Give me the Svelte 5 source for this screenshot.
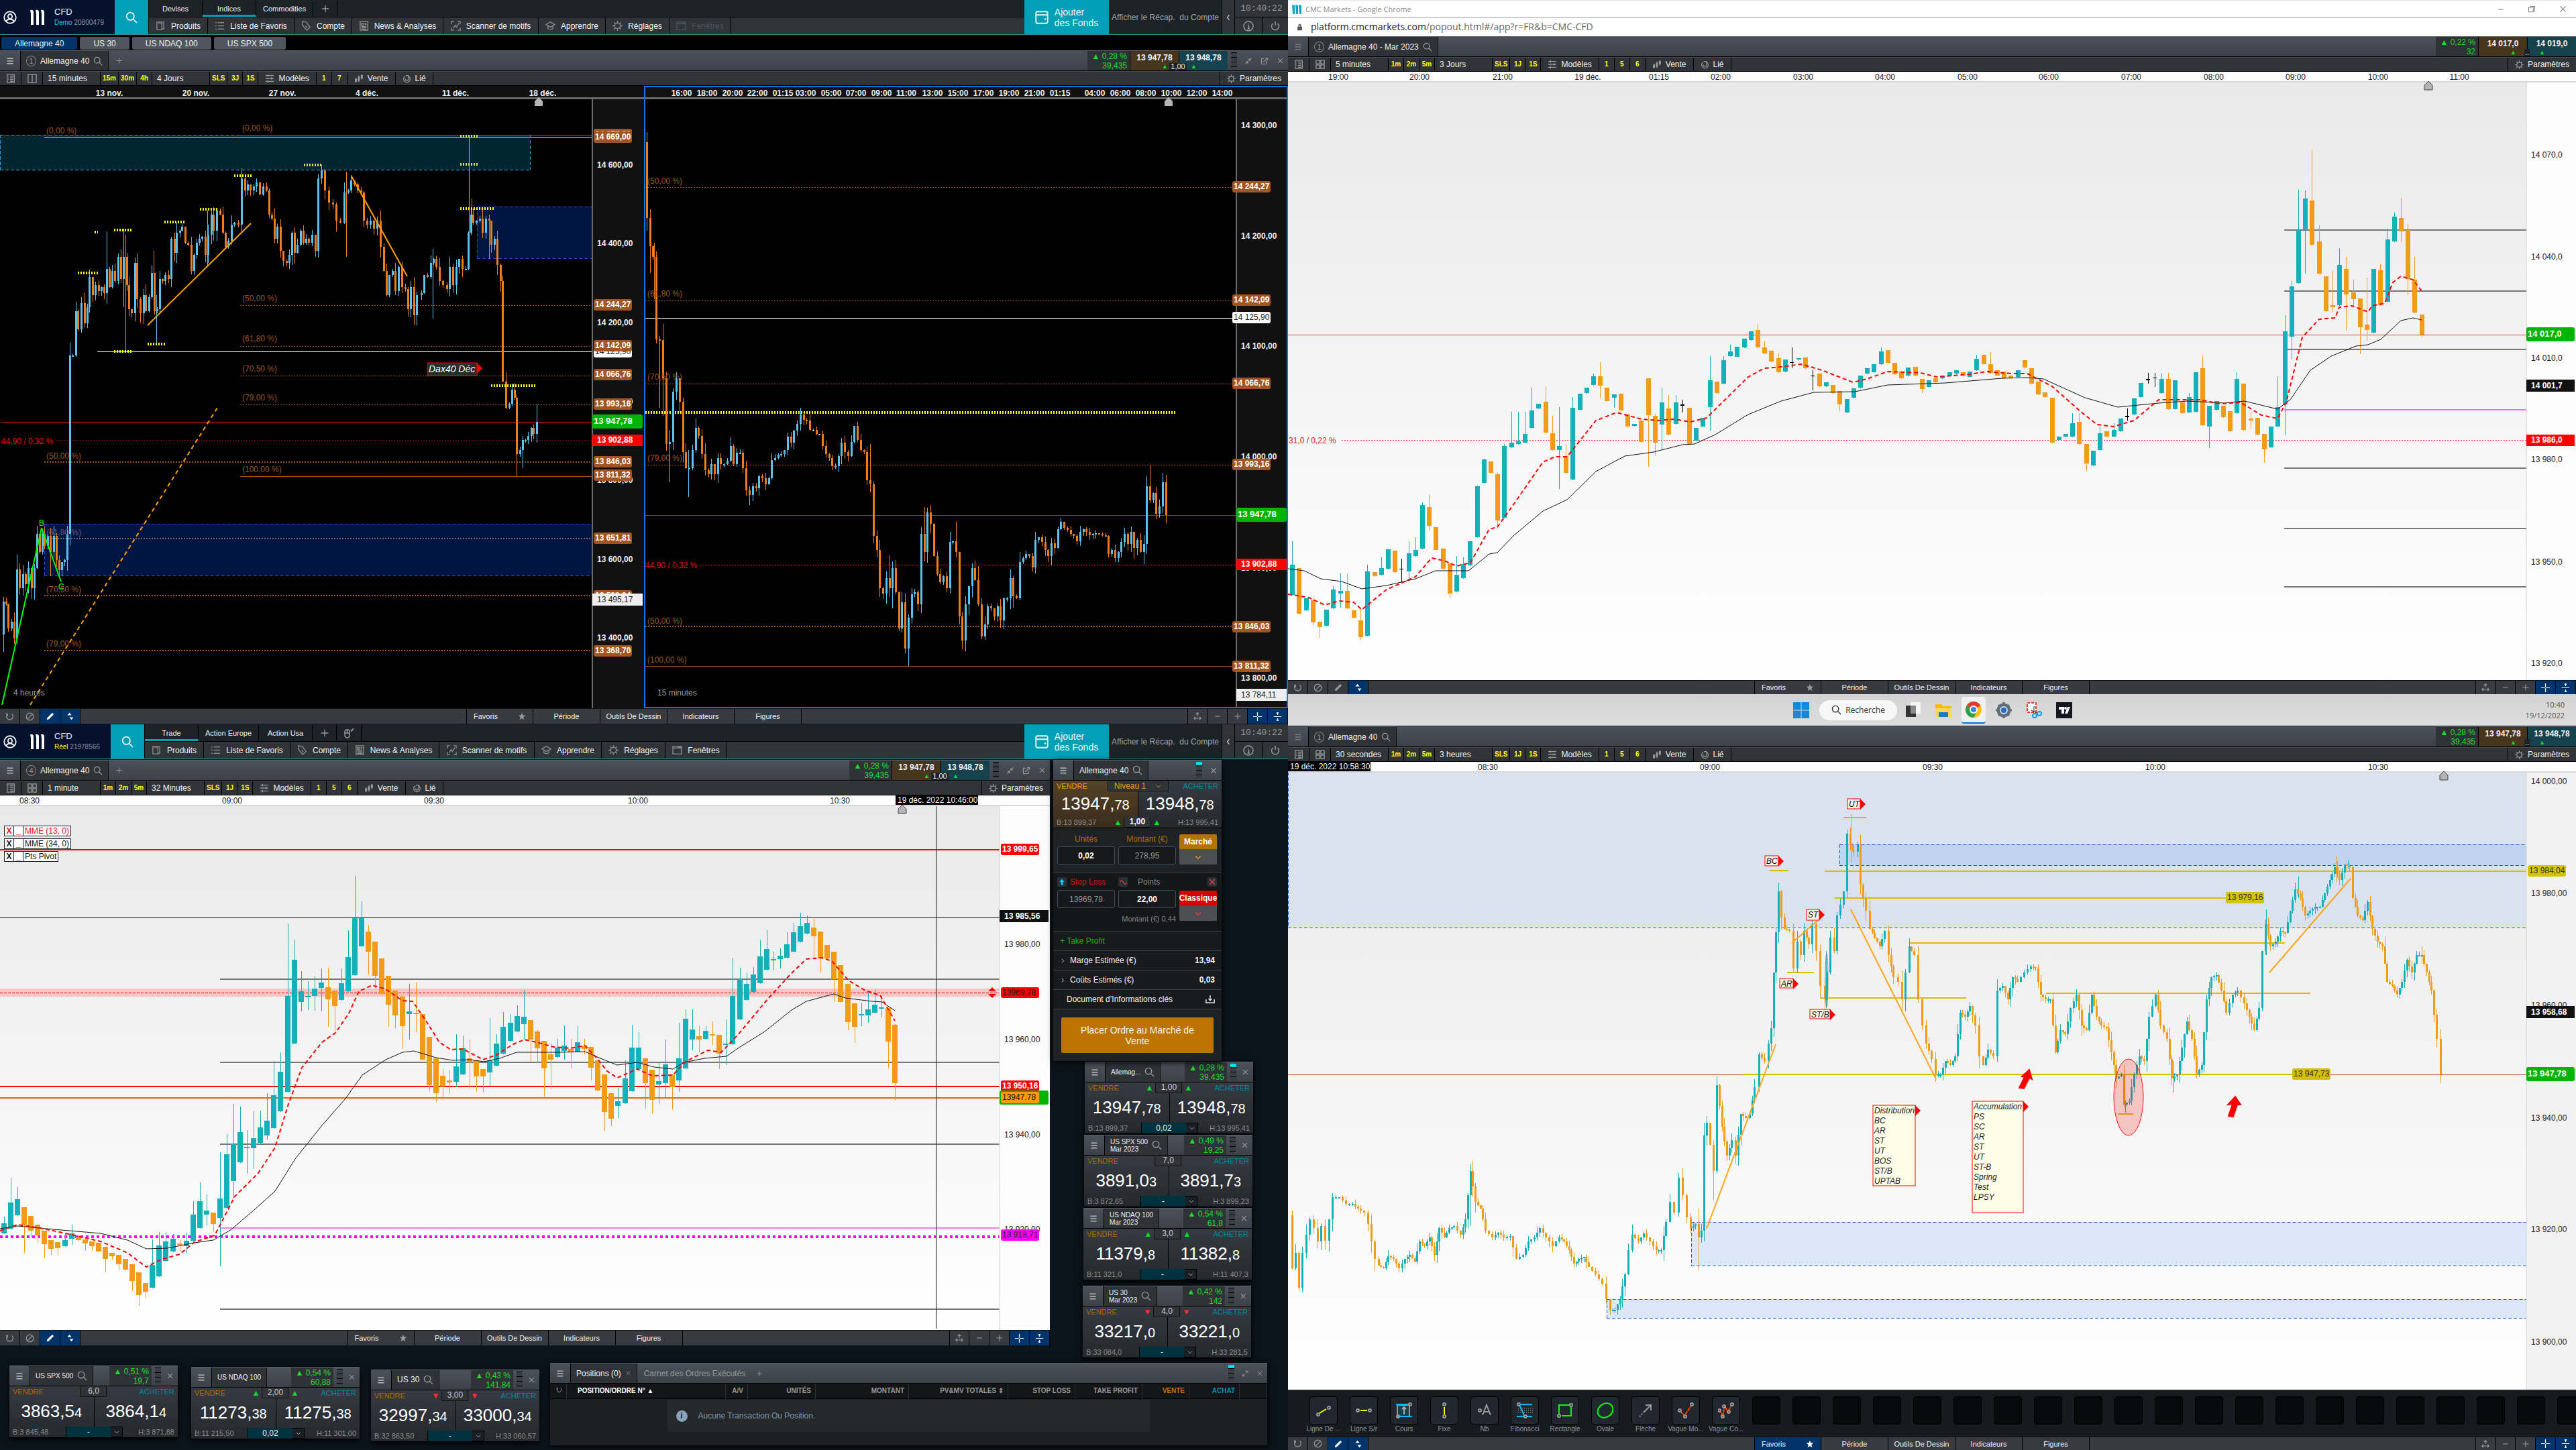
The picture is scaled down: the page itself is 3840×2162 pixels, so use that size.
<script lang="ts">
  // Four-screen trading desk: two chart workspaces on the left, two popped-out charts on the right.

  const icons: Record<string, { d: string; fill?: boolean }> = {
    user: { d: 'M8 1a7 7 0 1 0 0 14A7 7 0 0 0 8 1M8 4a2.5 2.8 0 1 1 0 5.6A2.5 2.8 0 0 1 8 4M3.5 12.5c1-2 2.5-2.5 4.5-2.5s3.5.5 4.5 2.5' },
    search: { d: 'M6.5 1.5a5 5 0 1 0 0 10 5 5 0 0 0 0-10M10 10l5 5' },
    plus: { d: 'M8 2v12M2 8h12' },
    minus: { d: 'M3 8h10' },
    close: { d: 'M3 3l10 10M13 3L3 13' },
    bars: { d: 'M2 2h12v2H2zM2 7h12v2H2zM2 12h12v2H2z', fill: true },
    products: { d: 'M2 2h8v12H2zM4 3l6 2v10M10 2h3v11h-3' },
    list: { d: 'M1 3h2M1 8h2M1 13h2M5 3h10M5 8h10M5 13h10' },
    tag: { d: 'M2 1l6 1 6 8-5 5-7-8zM5 4h.1M7 8l3 3' },
    news: { d: 'M2 1h12v14H2zM4 4h3v3H4zM9 4h3M9 6h3M4 9h8M4 11h8M4 13h8' },
    scan: { d: 'M1 5V1h4M11 1h4v4M15 11v4h-4M5 15H1v-4M4 12l3-5 2 3 4-6' },
    learn: { d: 'M1 6l7-4 7 4-7 4zM4 8v4c2 2 6 2 8 0V8' },
    gear: { d: 'M8 3.5a4.5 4.5 0 1 0 0 9 4.5 4.5 0 0 0 0-9M8 0v3M8 13v3M0 8h3M13 8h3M2.5 2.5l2 2M11.5 11.5l2 2M13.5 2.5l-2 2M4.5 11.5l-2 2' },
    window: { d: 'M1 2h14v12H1zM1 4.5h14M9 3h5' },
    wallet: { d: 'M3 1h10q2 0 2 2v10q0 2-2 2H3q-2 0-2-2V3q0-2 2-2M1 5h14M11 10h2' },
    back: { d: 'M10 3L6 8l4 5' },
    down: { d: 'M3 6l5 5 5-5' },
    right: { d: 'M5 3l5 5-5 5' },
    info: { d: 'M8 1a7 7 0 1 0 0 14A7 7 0 0 0 8 1M8 4.5v1M7 7.5h1.5V12M6.5 12h3.5' },
    power: { d: 'M8 1v6M4.5 4a5.5 5.5 0 1 0 7 0' },
    mouse: { d: 'M2 6q0-3 3-3h1q3 0 3 3v5q0 4-3.5 4T2 11zM2 8h7M5.5 3v5M11 3l1 2 3-4' },
    doc: { d: 'M2 1h12v14H2zM4 4h1M4 7h1M4 10h1M7 4h5M7 7h5M7 10h5M7 13h5' },
    split: { d: 'M1 1h14v14H1zM8 1v14' },
    quad: { d: 'M1 1h6v6H1zM9 1h6v6H9zM1 9h6v6H1zM9 9h6v6H9z' },
    sliders: { d: 'M1 3h14M1 8h14M1 13h14M5 1v4M11 6v4M5 11v4' },
    candles: { d: 'M3 7v8M8 3v11M13 1v9M2 9h2v4H2zM7 6h2v5H7zM12 3h2v4h-2z' },
    link: { d: 'M11 3a6 6 0 1 1-6 0M5 8a3 3 0 0 0 6 0V2H6' },
    refresh: { d: 'M4 3a6 6 0 1 0 8 0M4 7V3H1' },
    ban: { d: 'M8 1.5a6.5 6.5 0 1 0 0 13 6.5 6.5 0 0 0 0-13M3.5 12.5l9-9' },
    pencil: { d: 'M1 15l1-4 9-9q1-1 2 0l1 1q1 1 0 2l-9 9z', fill: true },
    updown: { d: 'M6 1l4 5H2zM10 15l4-5H6z', fill: true },
    star: { d: 'M8 1l2 5h5l-4 3.5 1.5 5.5L8 12l-4.5 3L5 9.5 1 6h5z', fill: true },
    fit: { d: 'M8 1v7M5 4l3-3 3 3M1 12h14M4 9l-3 3 3 3M12 9l3 3-3 3' },
    cross: { d: 'M8 0v7M8 9v7M0 8h7M9 8h7' },
    vfit: { d: 'M1 8h14M8 0v5M8 11v5M6 2l2-2 2 2M6 14l2 2 2-2' },
    shrink: { d: 'M9 7V3M9 7h4M9 7l5-5M7 9v4M7 9H3M7 9l-5 5' },
    grow: { d: 'M9 2h5v5M14 2L9 7M2 9v5h5M2 14l5-5' },
    popout: { d: 'M8 3H2v11h10V8M6 10l8-8M10 2h4v4' },
    square: { d: 'M2 4h9v9H2zM5 4V2h9v9h-3' },
    lock: { d: 'M3 7h10v8H3zM5 7V4q0-3 3-3t3 3v3h-2V4H7v3z', fill: true },
    download: { d: 'M1 8v6h14V8M8 1v9M5 7l3 3 3-3' },
    arrowUp: { d: 'M8 1l6 7h-4v7H6V8H2z', fill: true },
    wave: { d: 'M1 8q3-8 7 0t7 0' },
  };

  type Box = [number, number, number, number];
  type Stroke = { p: Box; c: string; w?: number; dash?: string };
  type Tag = { y: number; text: string; bg: string; fg?: string; kind?: 'full'; x?: number; h?: number };
  type Chart = {
    name: string; w: number; h: number; kx: number; ky: number; y0: number; dark?: boolean;
    axis: number; axisBg: string; body: number; up: string; down: string;
    times: [number, string][]; marker: number; ticks: [number, string][]; tags: Tag[];
    zones: { box: Box; fill: string; stroke?: string }[];
    lines: Stroke[];
    over?: Stroke[];
    texts?: [number, number, string, string][];
    notes?: { box: Box; lines: string[]; bg: string; fg: string }[];
    bars?: string; start?: number; step: number; path?: string; spikes?: Box[];
    fast?: string; slow?: string;
  };

  const brown = '#9b5522';
  const rust = '#a3541f';
  const gold = '#d6bd00';

  const daxHours: Chart = {
    name: 'Allemagne 40, 4 heures', w: 960, h: 928, kx: 1.6333, ky: 1.668, y0: -12, dark: true,
    axis: 1443, axisBg: '#111', body: 3, up: '#5bc3ef', down: '#ee7d1b', step: 7,
    times: [[267, '13 nov.'], [477, '20 nov.'], [688, '27 nov.'], [894, '4 déc.'], [1109, '11 déc.'], [1321, '18 déc.']],
    marker: 1312,
    ticks: [[176, '14 600,00'], [372, '14 400,00'], [568, '14 200,00'], [765, '14 000,00'], [960, '13 800,00'], [1157, '13 600,00'], [1352, '13 400,00']],
    tags: [
      { y: 100, text: '14 677,21', bg: rust }, { y: 107, text: '14 669,00', bg: rust }, { y: 524, text: '14 244,27', bg: rust },
      { y: 640, text: '14 125,90', bg: '#fff', fg: '#222' }, { y: 625, text: '14 142,09', bg: rust }, { y: 698, text: '14 066,76', bg: rust },
      { y: 771, text: '13 993,16', bg: rust }, { y: 914, text: '13 846,03', bg: rust }, { y: 948, text: '13 811,32', bg: rust },
      { y: 1105, text: '13 651,81', bg: rust }, { y: 1247, text: '13 508,34', bg: rust }, { y: 1384, text: '13 368,70', bg: rust },
      { y: 814, text: '13 947,78', bg: '#00b400', kind: 'full', h: 21 }, { y: 860, text: '13 902,88', bg: '#f00', kind: 'full', h: 17 },
      { y: 1257, text: '13 495,17', bg: '#eee', fg: '#222', kind: 'full', h: 18 },
    ],
    zones: [
      { box: [0, 102, 1291, 188], fill: '#022631', stroke: '#1e9fe0' },
      { box: [1162, 281, 1443, 409], fill: '#001541', stroke: '#1448d8' },
      { box: [108, 1070, 1443, 1198], fill: '#001541', stroke: '#1448d8' },
    ],
    lines: [
      { p: [585, 101, 1443, 101], c: brown }, { p: [108, 108, 1443, 108], c: '#a07050', w: 2 },
      { p: [585, 525, 1443, 525], c: brown, dash: '2 2' }, { p: [585, 627, 1443, 627], c: brown, dash: '2 2' },
      { p: [585, 700, 1443, 700], c: brown, dash: '2 2' }, { p: [585, 773, 1443, 773], c: brown, dash: '2 2' },
      { p: [108, 915, 1443, 915], c: brown, w: 2, dash: '2 2' }, { p: [585, 950, 1443, 950], c: brown },
      { p: [108, 1106, 1443, 1106], c: '#7c6468', w: 2, dash: '2 2' }, { p: [108, 1248, 1443, 1248], c: brown, w: 2, dash: '2 2' },
      { p: [108, 1385, 1443, 1385], c: brown, w: 2, dash: '2 2' }, { p: [237, 641, 1443, 641], c: '#fff' },
      { p: [3, 816, 1443, 816], c: '#f01010' }, { p: [135, 861, 1443, 861], c: '#8c1010', dash: '2 2' },
    ],
    over: [
      { p: [360, 575, 611, 322], c: '#ffa000', w: 2 }, { p: [856, 205, 991, 454], c: '#ffa000', w: 2 },
      { p: [73, 1520, 529, 781], c: '#ffa000', w: 2, dash: '6 5' },
      { p: [5, 1520, 102, 1080], c: '#0f0', w: 2 }, { p: [102, 1080, 149, 1212], c: '#0f0', w: 2 },
      { p: [189, 446, 240, 446], c: '#ff0', w: 4, dash: '2 2' }, { p: [230, 343, 238, 343], c: '#ff0', w: 4, dash: '2 2' },
      { p: [278, 338, 320, 338], c: '#ff0', w: 4, dash: '2 2' }, { p: [278, 640, 320, 640], c: '#ff0', w: 4, dash: '2 2' },
      { p: [359, 622, 402, 622], c: '#ff0', w: 4, dash: '2 2' }, { p: [400, 318, 451, 318], c: '#ff0', w: 4, dash: '2 2' },
      { p: [487, 287, 532, 287], c: '#ff0', w: 4, dash: '2 2' }, { p: [570, 203, 613, 203], c: '#ff0', w: 4, dash: '2 2' },
      { p: [740, 177, 784, 177], c: '#cfe14c', w: 4, dash: '2 2' }, { p: [1120, 105, 1164, 105], c: '#cfe14c', w: 4, dash: '2 2' },
      { p: [1120, 175, 1164, 175], c: '#cfe14c', w: 4, dash: '2 2' }, { p: [1120, 285, 1203, 285], c: '#ff0', w: 4, dash: '2 2' },
      { p: [1196, 725, 1304, 725], c: '#ff0', w: 4, dash: '2 2' },
    ],
    texts: [
      [113, 99, '(0,00 %)', brown], [590, 91, '(0,00 %)', brown], [590, 516, '(50,00 %)', brown], [590, 616, '(61,80 %)', brown],
      [590, 690, '(70,50 %)', brown], [590, 763, '(79,00 %)', brown], [590, 940, '(100,00 %)', brown], [113, 907, '(50,00 %)', brown],
      [113, 1098, '(61,80 %)', '#6b5a70'], [113, 1239, '(70,50 %)', brown], [113, 1375, '(79,00 %)', brown], [4, 870, '44,90 / 0,32 %', '#e01010'],
      [33, 1497, '4 heures', '#999'], [94, 1074, 'B', '#0f0'], [142, 1232, 'C', '#0f0'],
    ],
    notes: [{ box: [1040, 669, 1161, 700], lines: ['Dax40 Déc'], bg: '#2b2b2b', fg: '#fff' }],
    path: '8,1345 8,1262 14,1270 20,1330 28,1313 35,1355 41,1183 48,1230 55,1195 62,1220 68,1180 76,1230 84,1180 90,1095 96,1140 103,1095 108,1125 116,1100 123,1140 130,1100 137,1160 144,1185 150,1165 157,1160 163,1095 170,650 177,650 184,540 190,585 198,520 205,570 212,530 218,455 225,500 232,475 240,490 246,480 253,495 259,435 266,480 272,440 280,465 287,405 294,460 301,405 308,475 314,535 320,545 328,420 334,510 342,545 349,500 355,540 362,505 369,445 376,540 382,535 389,460 396,465 402,450 410,460 417,360 424,395 430,345 437,340 443,330 450,370 458,375 465,440 472,400 478,370 485,360 492,355 500,400 507,350 514,300 520,340 527,290 535,300 542,345 549,380 556,365 563,325 570,320 580,325 588,210 596,240 603,225 610,240 617,230 624,220 632,250 640,230 648,240 655,300 662,310 668,360 674,330 682,390 690,415 697,420 704,400 710,345 717,395 724,375 731,340 738,370 745,360 752,370 760,350 767,390 775,210 782,190 790,240 800,270 810,275 818,315 828,320 838,245 848,240 855,215 863,225 870,240 878,245 886,315 894,325 902,315 910,335 918,315 926,380 934,440 940,500 948,450 955,440 962,490 970,430 978,480 986,485 993,535 1000,480 1008,550 1015,500 1025,495 1032,450 1040,455 1048,420 1055,410 1062,430 1070,465 1078,475 1088,485 1095,430 1102,475 1110,430 1117,410 1125,435 1133,435 1140,345 1146,300 1152,320 1160,315 1168,310 1175,345 1182,310 1190,315 1196,375 1204,360 1210,425 1218,465 1224,715 1232,780 1240,770 1246,735 1252,755 1258,895 1265,885 1272,860 1279,860 1286,850 1293,830 1299,845 1306,815',
    spikes: [[170, 618, 1110, 1], [259, 342, 490, 1], [300, 335, 530, 1], [306, 350, 640, 0], [381, 500, 625, 1], [374, 390, 500, 0], [504, 290, 430, 1], [843, 193, 406, 0], [1054, 385, 558, 1], [1142, 106, 370, 1], [1149, 260, 320, 0], [1190, 300, 410, 0], [1258, 755, 950, 0], [1272, 850, 930, 1], [1306, 773, 850, 1], [41, 1146, 1368, 1], [8, 1260, 1388, 1], [123, 1080, 1200, 0]],
  };

  const daxQuarter: Chart = {
    name: 'Allemagne 40, 15 minutes', w: 960, h: 928, kx: 1.6333, ky: 1.668, y0: -12, dark: true,
    axis: 1443, axisBg: '#111', body: 3, up: '#5bc3ef', down: '#ee7d1b', step: 8,
    times: [[92, '16:00'], [154, '18:00'], [215, '20:00'], [276, '22:00'], [338, '01:15'], [394, '03:00'], [456, '05:00'], [516, '07:00'], [578, '09:00'], [639, '11:00'], [702, '13:00'], [765, '15:00'], [827, '17:00'], [889, '19:00'], [950, '21:00'], [1013, '01:15'], [1097, '04:00'], [1160, '06:00'], [1222, '08:00'], [1284, '10:00'], [1346, '12:00'], [1408, '14:00']],
    marker: 1278,
    ticks: [[79, '14 300,00'], [353, '14 200,00'], [628, '14 100,00'], [903, '14 000,00'], [1179, '13 900,00'], [1452, '13 800,00']],
    tags: [
      { y: 231, text: '14 244,27', bg: rust, x: 1432 }, { y: 512, text: '14 142,09', bg: rust, x: 1432 }, { y: 556, text: '14 125,90', bg: '#fff', fg: '#222', x: 1432 },
      { y: 719, text: '14 066,76', bg: rust, x: 1432 }, { y: 921, text: '13 993,16', bg: rust, x: 1432 }, { y: 1325, text: '13 846,03', bg: rust, x: 1432 },
      { y: 1422, text: '13 811,32', bg: rust, x: 1432 }, { y: 1046, text: '13 947,78', bg: '#00b400', kind: 'full', h: 21 },
      { y: 1170, text: '13 902,88', bg: '#f00', kind: 'full', h: 17 }, { y: 1494, text: '13 784,11', bg: '#eee', fg: '#222', kind: 'full', h: 18 },
    ],
    zones: [],
    lines: [
      { p: [3, 232, 1432, 232], c: brown, dash: '2 2' }, { p: [3, 514, 1432, 514], c: brown, dash: '2 2' }, { p: [3, 557, 1432, 557], c: '#fff' },
      { p: [3, 721, 1432, 721], c: brown, dash: '2 2' }, { p: [3, 922, 1432, 922], c: brown, dash: '2 2' }, { p: [3, 1325, 1432, 1325], c: brown, w: 2, dash: '2 2' },
      { p: [3, 1423, 1432, 1423], c: brown }, { p: [3, 1048, 1443, 1048], c: '#f01010' }, { p: [135, 1171, 1443, 1171], c: '#f01010', dash: '2 2' },
      { p: [3, 792, 1294, 792], c: '#ff0', w: 4, dash: '2 2' },
    ],
    texts: [
      [8, 223, '(50,00 %)', brown], [8, 504, '(61,80 %)', brown], [8, 711, '(70,50 %)', brown], [8, 913, '(79,00 %)', brown],
      [8, 1317, '(50,00 %)', brown], [8, 1414, '(100,00 %)', brown], [4, 1180, '44,90 / 0,32 %', '#e01010'], [33, 1497, '15 minutes', '#999'],
    ],
    path: '6,120 7,308 14,378 22,405 30,610 38,612 46,708 54,870 62,865 70,740 78,708 86,765 94,890 102,930 109,930 117,885 125,830 132,850 140,895 148,935 156,945 163,920 171,945 179,905 187,920 194,920 202,912 210,875 218,920 225,892 233,892 240,930 248,985 256,998 264,975 272,980 279,950 287,955 295,970 303,955 310,910 318,905 326,898 334,895 341,885 349,852 357,868 365,838 372,820 380,797 388,810 396,812 403,835 411,835 419,845 427,845 434,875 442,895 450,905 458,925 465,925 473,900 481,868 489,890 496,900 504,865 512,825 520,860 527,885 535,890 543,960 551,970 558,1100 566,1135 574,1230 582,1243 590,1205 597,1230 605,1180 613,1240 620,1330 628,1265 636,1380 643,1303 651,1245 658,1240 666,1270 674,1095 682,1140 690,1040 697,1070 705,1150 713,1195 720,1215 728,1200 736,1230 744,1115 752,1113 759,1140 767,1300 775,1360 783,1270 790,1225 798,1180 806,1210 814,1270 821,1350 829,1320 837,1275 845,1280 852,1300 860,1275 868,1310 876,1255 884,1255 891,1205 899,1250 907,1255 914,1165 922,1155 930,1145 938,1150 945,1178 953,1110 961,1103 968,1115 976,1135 984,1150 991,1118 999,1130 1007,1083 1015,1065 1022,1080 1030,1085 1038,1095 1046,1100 1054,1112 1061,1090 1069,1083 1077,1090 1085,1098 1092,1095 1100,1092 1108,1095 1116,1098 1123,1100 1131,1145 1139,1135 1147,1155 1154,1140 1162,1115 1170,1095 1178,1120 1185,1090 1193,1130 1201,1110 1209,1140 1216,1120 1224,975 1232,1010 1240,993 1247,1045 1255,1025 1263,965 1270,1048',
    spikes: [[7, 95, 340, 1], [14, 290, 445, 0], [24, 370, 510, 0], [38, 608, 780, 1], [46, 572, 800, 0], [62, 837, 965, 1], [108, 885, 1003, 1], [256, 975, 1023, 1], [380, 793, 820, 1], [550, 870, 990, 0], [597, 1148, 1245, 0], [605, 1162, 1280, 1], [628, 1240, 1340, 1], [643, 1295, 1423, 1], [682, 1028, 1150, 0], [759, 1065, 1140, 0], [783, 1255, 1386, 1], [814, 1175, 1275, 0], [1224, 950, 1145, 1], [1232, 922, 1015, 0], [1216, 1097, 1170, 1], [1263, 942, 1025, 1]],
  };

  const daxFuture: Chart = {
    name: 'Allemagne 40 - Mar 2023, 5 minutes', w: 1920, h: 907, kx: 0.8167, ky: 1.4505, y0: 107,
    axis: 1508, axisBg: '#fcfcfc', body: 7, up: '#14b1ba', down: '#f29b16', start: 5, step: 8.333,
    times: [[61, '19:00'], [160, '20:00'], [261, '21:00'], [365, '19 déc.'], [452, '01:15'], [527, '02:00'], [627, '03:00'], [727, '04:00'], [827, '05:00'], [926, '06:00'], [1027, '07:00'], [1127, '08:00'], [1227, '09:00'], [1327, '10:00'], [1426, '11:00']],
    marker: 1388,
    ticks: [[335, '14 070,0'], [555, '14 040,0'], [774, '14 010,0'], [994, '13 980,0'], [1215, '13 950,0'], [1434, '13 920,0']],
    tags: [
      { y: 723, text: '14 017,0', bg: '#00b400', kind: 'full', h: 21 }, { y: 834, text: '14 001,7', bg: '#111', kind: 'full', h: 18 },
      { y: 951, text: '13 986,0', bg: '#f00', kind: 'full', h: 17 },
    ],
    zones: [],
    lines: [
      { p: [1213, 498, 1508, 498], c: '#777', w: 2 }, { p: [1213, 629, 1508, 629], c: '#777', w: 2 }, { p: [1213, 755, 1508, 755], c: '#777', w: 2 },
      { p: [1213, 886, 1508, 886], c: '#fa70fa', w: 2 }, { p: [1213, 1012, 1508, 1012], c: '#777', w: 2 }, { p: [1213, 1143, 1508, 1143], c: '#777', w: 2 },
      { p: [1213, 1269, 1508, 1269], c: '#777', w: 2 }, { p: [0, 724, 1508, 724], c: '#f03030' }, { p: [65, 952, 1508, 952], c: '#f03030', dash: '2 2' },
    ],
    texts: [[1, 959, '31,0 / 0,22 %', '#e02020']],
    bars: 'u1221,1287,1170 d1228,1327 u1294,1320 d1298,1346,1293,1352 d1345,1356,,1378 u1318,1354 u1275,1316,1268 u1278,1284,1240,1312 d1278,1315,1240 d1320,1336 d1342,1378,1318,1382 u1236,1375,1222 d1238,1246 u1229,1243,1205 u1188,1230 d1191,1238 k1230,1232,1208,1260 u1197,1236,1170,1250 u1190,1203,1162 u1092,1186,1087 d1097,1137,1070,1146 d1140,1190 d1186,1230 d1218,1284,,1291 u1243,1279,1202 u1220,1250,1205 u1170,1223 u1052,1162,1050 u994,1044,992 d998,1023 d1026,1125,1022,1142 u965,1120,960 u957,968,890 u955,960,890 u938,957,890 u888,926,838 u873,884 d869,935,835 d937,973,900 u965,974,880,1056 d987,1022,960 u882,1037,858 u852,886 u838,850 u814,833,808 d814,834,783,860 d838,867 u853,860,,880 d851,888 d896,923 u917,921 d910,956 d818,898,,1008 d900,957,895,983 u870,918,838,970 d884,940,855 u870,916,855 k874,877,865,890 d882,960 u925,953 u904,923 u822,880,770,930 d826,850 u779,830,770 u760,770,745 u750,772 u732,752 u716,735 d714,752,700 d752,764,738 d758,782 d775,805,765 u778,803 k783,785,751,795 u775,778 d773,797 k812,814,800,843 d808,836 u827,836 d832,850 d845,875,,888 u863,892 u840,860 u812,838 u797,808 u788,805 u760,787,752 d757,784 d784,810 d803,818 u795,812 d794,812 d820,841,,849 u822,837 d818,827 u812,818 u805,813 u801,808 d805,812 u803,815 u776,800,768 d768,788 d788,806,762 d800,812 d803,818 d812,818 u800,815 d779,795 d797,830 d826,853 d848,858 d860,958 u944,952 u938,944 u915,944,893 d913,960,893 d960,1002,,1017 u975,1006 u937,973,922 d933,944 u930,944,915 u905,933 k900,902,883,908 u862,896 u828,858 k820,822,806,828 k816,818,806,835 u820,850,808 d820,885,806 u823,885 d870,893 u858,892,850 u805,890 d797,920,770 u878,923,,967 u868,886 d878,902 d889,933 u820,893,805 d830,930 d905,910,890,926 d904,940 d938,972,,1000 u922,968 u880,922,814 u716,875,682,940 u620,728,608,775 u498,612,410 u430,498,412,590 d434,530,325 d522,592,487 d597,673 d660,665,586,675 u573,660,537 d582,637,555,713 d632,647,605,663 d645,708,,765 d702,714,600,735 u582,720 d585,660,572 u518,653,495 u468,522,460 d472,500,428,522 d498,603,485,637 d605,676,555 d680,724,,728',
    fast: '0,1285 25,1293 45,1308 62,1300 80,1303 90,1318 120,1275 155,1248 175,1207 190,1212 205,1224 222,1217 245,1145 255,1140 275,1090 310,1000 325,988 340,988 375,910 400,892 430,907 450,910 470,907 490,912 510,903 560,815 580,797 600,793 625,788 650,800 688,827 705,820 730,803 770,806 790,815 830,810 850,803 880,808 900,808 930,835 965,890 985,918 1005,923 1030,910 1060,865 1080,865 1110,865 1135,873 1160,870 1185,898 1205,905 1215,870 1235,730 1255,690 1275,687 1280,665 1295,662 1315,674 1320,662 1335,655 1345,610 1355,598 1370,605 1380,630',
    slow: '0,1230 20,1235 40,1252 65,1258 90,1273 120,1266 155,1252 180,1234 220,1235 245,1198 255,1195 275,1158 310,1105 340,1080 375,1020 410,987 445,977 480,961 495,960 520,940 560,897 600,867 640,848 690,847 730,832 800,828 870,818 900,817 920,820 970,860 1010,880 1060,872 1095,868 1140,872 1165,867 1205,885 1220,865 1245,800 1270,770 1300,748 1315,746 1330,734 1355,693 1370,688 1380,692',
  };

  const daxMinute: Chart = {
    name: 'Allemagne 40, 1 minute', w: 1565, h: 797, kx: 1, ky: 1.8447, y0: 6,
    axis: 1490, axisBg: '#fcfcfc', body: 8, up: '#14b1ba', down: '#f29b16', start: 6, step: 10.06,
    times: [[44, '08:30'], [346, '09:00'], [647, '09:30'], [951, '10:00'], [1252, '10:30']],
    marker: 1345,
    ticks: [[420, '13 980,00'], [682, '13 960,00'], [944, '13 940,00'], [1205, '13 920,00']],
    tags: [
      { y: 159, text: '13 999,65', bg: '#f00', x: 1492 }, { y: 344, text: '13 985,56', bg: '#111', kind: 'full', h: 18 },
      { y: 554, text: '13969.78', bg: '#f00', fg: '#111', x: 1492, h: 16 }, { y: 810, text: '13 950,16', bg: '#f00', x: 1492 },
      { y: 841, text: '', bg: '#00b400', kind: 'full', h: 21 }, { y: 841, text: '13947.78', bg: '#ff9d00', fg: '#111', x: 1492, h: 17 },
      { y: 1220, text: '13 918,71', bg: '#f0f', fg: '#222', x: 1492 },
    ],
    zones: [{ box: [0, 543, 1490, 565], fill: '#f9c4c4' }],
    lines: [
      { p: [0, 161, 1490, 161], c: '#f00', w: 2 }, { p: [0, 346, 1490, 346], c: '#111' }, { p: [0, 554, 1490, 554], c: '#e00000', dash: '4 2' },
      { p: [328, 516, 1490, 516], c: '#777', w: 2 }, { p: [328, 745, 1490, 745], c: '#777', w: 2 }, { p: [328, 971, 1490, 971], c: '#777', w: 2 },
      { p: [328, 1201, 1490, 1201], c: '#f77cf7', w: 2 }, { p: [328, 1425, 1490, 1425], c: '#777', w: 2 },
      { p: [0, 811, 1490, 811], c: '#f00', w: 2 }, { p: [0, 843, 1490, 843], c: '#ff5a00', w: 2 },
      { p: [0, 1224, 1490, 1224], c: '#f0f', w: 4, dash: '4 4' },
    ],
    bars: 'u1188,1215,1170 u1130,1203,1063 u1122,1166,1088 d1143,1192,,1268 d1168,1208,,1225 d1192,1222,,1240 d1208,1245,,1282 d1235,1258,,1272 d1240,1257,,1275 u1235,1250,1215 u1215,1230,1192,1245 d1225,1235 d1232,1243,,1262 d1238,1250,,1262 d1242,1265 d1252,1285,,1320 d1270,1278,,1285 d1274,1300,,1313 d1286,1316 d1301,1346,,1372 d1323,1386,,1413 d1353,1376,,1393 u1302,1365,1232 u1248,1334,1212 u1238,1292,1212 u1230,1265,1218 d1244,1247,1232,1262 u1236,1250,1213,1268 u1164,1236,1128 u1128,1200,1075 u1153,1164,1108,1192 d1158,1190,,1210 u1120,1174,992,1304 u998,1146,943 u968,1072,860,1118 u938,1020,867 u977,981,932,1050 u954,981,880,1036 u925,967,878 u906,946,830,955 u836,926,742 u772,880,717 u563,826,363 u463,694,407 u550,579,494,603 u562,566,522,600 u542,563,507,602 u526,540,487,603 d538,572,485,645 d548,591,,658 u528,573,487 u456,550,382 u348,505,233 u348,426,303 d386,440,368,502 d413,508,,540 d460,558 d508,587,,645 d548,616,,650 d565,646,560,706 u605,613,530,680 d609,613,525,660 d612,738 d675,808,,822 d734,830,,853 d782,811,763,842 d795,801,768,828 u756,798,667,812 u706,778,672 d735,745,682,815 d740,784,,824 d763,784,,827 u740,773,624,808 u694,754,668 u648,722,606 u636,686,612 u618,660,588 u619,640,548,680 d629,682,,742 d660,706,655,745 d686,762,,838 d723,738,692,818 u705,731,680 u699,714,644,736 d708,718,680,760 u690,716,646 d700,709,680,722 d703,760,,794 d740,822 d778,882,,932 d830,900,,918 u852,866,815,896 u790,857,740 u705,825,642 u705,763,662 d735,803,,870 d766,848,,884 u797,806,743,858 u750,802,682,842 d778,813,,873 u735,795,636,825 u625,762,600 u655,683,600,710 d673,683,645,715 u658,680,645 d667,671,632,695 d670,722,,762 u693,696,627,750 u562,695,458 u517,627,485 u530,574,500 u504,552,484 u454,528,407 u434,490,380 u461,463,440,490 u452,462,432,485 u421,458,387 u387,441,362 u370,413,334 u362,391,342 d375,398,347,458 d386,460,,497 d422,460 d441,517,,578 d478,580 d530,635,,655 d583,648,,690 u612,616,582,643 u600,616,553,635 u586,608,545 u594,598,560,620 d596,688,,760 d642,802,640,848',
    fast: '0,1208 26,1192 60,1200 107,1220 150,1238 190,1270 218,1307 240,1288 268,1272 290,1240 320,1222 350,1115 385,1050 410,980 430,860 450,760 480,690 500,665 520,610 535,550 555,534 575,545 600,576 615,577 635,630 655,690 672,710 690,708 720,737 740,725 765,695 782,682 800,690 825,702 850,706 872,700 890,735 905,770 920,787 950,764 972,782 1003,780 1022,744 1055,712 1075,717 1100,670 1145,570 1180,500 1202,462 1225,458 1240,467 1265,520 1290,548 1312,560 1334,630',
    slow: '0,1203 26,1195 80,1205 150,1215 190,1235 218,1258 250,1256 290,1242 318,1234 345,1205 380,1150 410,1100 440,1010 480,918 515,845 540,780 575,737 600,718 617,713 650,732 675,740 700,737 722,743 745,735 770,718 800,717 835,718 872,715 895,735 920,752 950,746 975,758 1003,763 1020,745 1050,735 1083,729 1100,707 1140,660 1180,602 1202,577 1243,558 1260,568 1300,577 1315,580 1334,603',
  };

  const daxSeconds: Chart = {
    name: 'Allemagne 40, 30 secondes', w: 1920, h: 936, kx: 0.8167, ky: 1.5223, y0: 106,
    axis: 1508, axisBg: '#f2f2f2', body: 3, up: '#14b1ba', down: '#f29b16', step: 3.8,
    times: [[243, '08:30'], [514, '09:00'], [785, '09:30'], [1056, '10:00'], [1327, '10:30']],
    marker: 1407,
    ticks: [[205, '14 000,00'], [459, '13 980,00'], [714, '13 960,00'], [969, '13 940,00'], [1223, '13 920,00'], [1478, '13 900,00']],
    tags: [
      { y: 408, text: '13 984,04', bg: '#d2c200', fg: '#333', x: 1509 }, { y: 469, text: '13 979,16', bg: '#d2c200', fg: '#333', x: 1142 },
      { y: 869, text: '13 947,73', bg: '#d6bd00', fg: '#333', x: 1223 }, { y: 729, text: '13 958,68', bg: '#111', kind: 'full', h: 18 },
      { y: 869, text: '13 947,78', bg: '#00b400', kind: 'full', h: 21 },
    ],
    zones: [
      { box: [0, 184, 1508, 538], fill: '#dbe2ef', stroke: '#1a5fd8' }, { box: [671, 348, 1508, 396], fill: '#c2d2f1', stroke: '#1a5fd8' },
      { box: [491, 1205, 1508, 1305], fill: '#dce7fa', stroke: '#1a5fd8' }, { box: [388, 1380, 1508, 1424], fill: '#dce7fa', stroke: '#1a5fd8' },
    ],
    lines: [
      { p: [0, 871, 1508, 871], c: '#e05038' }, { p: [653, 409, 1508, 409], c: gold, w: 2 }, { p: [666, 470, 1142, 470], c: gold, w: 2 },
      { p: [757, 573, 1214, 573], c: gold, w: 2 }, { p: [648, 697, 826, 697], c: gold, w: 2 }, { p: [923, 686, 1245, 686], c: gold, w: 2 },
      { p: [554, 870, 1223, 870], c: gold, w: 2 }, { p: [676, 287, 704, 287], c: gold, w: 2 }, { p: [586, 408, 609, 408], c: gold, w: 2 },
      { p: [608, 640, 640, 640], c: gold, w: 2 }, { p: [1010, 960, 1029, 960], c: gold, w: 2 },
    ],
    over: [
      { p: [510, 1221, 594, 802], c: '#ffa51e', w: 2 }, { p: [613, 573, 644, 522], c: '#ffa51e', w: 2 },
      { p: [685, 496, 789, 882], c: '#ffa51e', w: 2 }, { p: [1195, 640, 1294, 427], c: '#ffa51e', w: 2 },
    ],
    notes: [
      { box: [681, 245, 697, 268], lines: ['UT'], bg: '#f5f2e4', fg: '#111' }, { box: [581, 375, 597, 398], lines: ['BC'], bg: '#f5f2e4', fg: '#111' },
      { box: [631, 497, 647, 520], lines: ['ST'], bg: '#f5f2e4', fg: '#111' }, { box: [599, 653, 615, 675], lines: ['AR'], bg: '#f5f2e4', fg: '#111' },
      { box: [635, 723, 660, 745], lines: ['ST/B'], bg: '#f5f2e4', fg: '#111' },
      { box: [712, 941, 764, 1124], lines: ['Distribution', 'BC', 'AR', 'ST', 'UT', 'BOS', 'ST/B', 'UPTAB'], bg: '#fdfde8', fg: '#222' },
      { box: [833, 932, 895, 1184], lines: ['Accumulation', 'PS', 'SC', 'AR', 'ST', 'UT', 'ST-B', 'Spring', 'Test', 'LPSY'], bg: '#fdfde8', fg: '#222' },
    ],
    path: '2,1190 5,1310 9,1275 13,1355 17,1275 22,1235 26,1200 31,1220 36,1250 40,1215 45,1248 50,1200 54,1150 62,1150 70,1165 78,1165 85,1175 92,1185 97,1210 101,1250 105,1290 110,1305 116,1310 122,1283 128,1290 135,1310 142,1290 148,1280 154,1295 160,1250 166,1260 172,1240 178,1280 184,1220 190,1240 196,1220 202,1215 210,1235 216,1200 222,1090 228,1160 234,1175 240,1225 248,1240 256,1230 262,1240 270,1238 278,1290 286,1280 292,1250 300,1240 306,1220 314,1240 322,1260 330,1240 336,1250 342,1270 348,1300 354,1290 360,1285 366,1308 374,1325 382,1345 387,1380 392,1405 398,1405 404,1380 410,1325 414,1270 419,1235 426,1250 433,1232 440,1250 448,1270 454,1270 460,1205 465,1160 470,1185 475,1105 480,1145 485,1195 490,1220 496,1210 500,1240 503,1225 506,1010 510,980 514,1030 518,1090 522,895 528,990 534,1055 540,1020 545,1055 551,960 557,970 562,960 568,900 573,825 580,840 585,800 588,765 591,640 597,455 600,515 604,540 610,545 615,630 620,570 624,600 628,545 634,575 638,530 643,590 648,670 653,700 656,640 660,560 665,590 668,510 672,485 676,455 680,325 684,350 688,365 693,350 697,440 703,500 708,540 714,560 720,580 726,545 731,600 737,650 742,660 747,700 751,640 756,580 762,600 767,700 772,760 777,800 783,835 788,870 794,870 800,840 806,850 812,830 818,730 824,740 830,715 836,760 841,830 846,850 852,815 858,830 863,680 870,670 876,700 882,650 888,660 896,640 904,625 910,630 916,690 922,700 928,700 934,820 940,770 946,780 952,720 960,690 966,760 972,770 978,690 984,740 990,760 996,765 1002,820 1008,880 1014,870 1018,940 1024,930 1030,870 1036,830 1042,840 1048,740 1056,690 1062,760 1070,790 1076,880 1082,870 1088,810 1094,750 1100,790 1106,870 1112,850 1118,700 1124,650 1130,645 1136,680 1142,730 1150,690 1156,680 1164,710 1170,740 1176,770 1182,720 1186,590 1190,530 1196,580 1202,570 1208,545 1214,550 1220,500 1226,450 1232,470 1238,510 1244,500 1250,490 1256,490 1262,460 1268,430 1274,400 1280,430 1286,395 1292,400 1296,470 1302,510 1308,520 1314,480 1320,540 1326,570 1332,580 1338,660 1344,670 1350,690 1356,660 1362,610 1368,640 1374,600 1380,600 1386,640 1392,680 1398,790 1403,870',
    spikes: [[222, 1088, 1215, 1], [500, 1175, 1315, 0], [506, 980, 1225, 1], [518, 1030, 1155, 0], [655, 590, 720, 1], [685, 280, 390, 0], [1019, 930, 958, 1], [1276, 376, 435, 0], [1290, 385, 405, 1], [1191, 497, 600, 1], [1230, 422, 470, 1], [1077, 840, 912, 1], [1380, 580, 620, 0]],
  };

  // Pixel path for wicks and bodies of every colour.
  function candles(c: Chart) {
    const out: Record<string, { wick: string; body: string }> = {
      u: { wick: '', body: '' }, d: { wick: '', body: '' }, k: { wick: '', body: '' },
    };
    const px = (x: number) => Math.round(x / c.kx);
    const py = (y: number) => Math.round(y / c.ky - c.y0);
    const add = (dir: string, x: number, top: number, bottom: number, hi: number, lo: number) => {
      const cx = px(x);
      const half = Math.floor(c.body / 2);
      const t = py(top);
      const wide = dir === 'k' ? 6 : c.body;
      out[dir].wick += `M${cx}.5 ${py(hi)}V${py(lo) + 1}`;
      out[dir].body += `M${cx - half} ${t}h${wide}v${Math.max(dir === 'k' ? 1 : 2, py(bottom) - t)}h-${wide}z`;
    };
    if (c.bars) {
      c.bars.split(' ').forEach((bar, i) => {
        const [top, bottom, hi, lo] = bar.slice(1).split(',').map(Number);
        add(bar[0], (c.start ?? 0) + i * c.step, top, bottom, hi || top, lo || bottom);
      });
    }
    if (c.path) {
      const pts = c.path.split(' ').map((p) => p.split(',').map(Number));
      let n = 0;
      for (let i = 1; i < pts.length; i++) {
        const [x0, y0] = pts[i - 1];
        const [x1, y1] = pts[i];
        const parts = Math.max(1, Math.round((x1 - x0) / c.step));
        for (let k = 1; k <= parts; k++) {
          n++;
          const a = y0 + ((y1 - y0) * (k - 1)) / parts;
          const b = y0 + ((y1 - y0) * k) / parts;
          const size = Math.min(Math.abs(a - b), 40) * 0.5 + 8;
          const reach = (((n * 37) % 11) / 11) * size;
          const tail = (((n * 53) % 13) / 13) * size;
          add(b <= a ? 'u' : 'd', x0 + ((x1 - x0) * k) / parts, Math.min(a, b), Math.max(a, b), Math.min(a, b) - reach, Math.max(a, b) + tail);
        }
      }
    }
    for (const [x, hi, lo, up] of c.spikes ?? []) out[up ? 'u' : 'd'].wick += `M${px(x)}.5 ${py(hi)}V${py(lo)}`;
    return out;
  }

  function curve(c: Chart, pts: string) {
    return pts.split(' ').map((p) => {
      const [x, y] = p.split(',').map(Number);
      return `${Math.round(x / c.kx)},${Math.round(y / c.ky - c.y0)}`;
    }).join(' ');
  }

  const menu = [
    ['products', 'Produits', 88], ['list', 'Liste de Favoris', 129], ['tag', 'Compte', 86], ['news', 'News & Analyses', 136],
    ['scan', 'Scanner de motifs', 142], ['learn', 'Apprendre', 100], ['gear', 'Réglages', 95], ['window', 'Fenêtres', 92],
  ] as const;

  type Quote = { name: string[]; size?: string; search?: boolean; pct: string; diff: string; spread: string; trend?: 'up' | 'down'; bid: [string, string]; ask: [string, string]; low: string; high: string; qty: string; lit?: boolean; x: number; y: number };
  const quotes: Quote[] = [
    { name: ['Allemag...'], search: true, pct: '0,28 %', diff: '39,435', spread: '1,00', trend: 'up', bid: ['13947,', '78'], ask: ['13948,', '78'], low: '13 899,37', high: '13 995,41', qty: '0,02', lit: true, x: 1617, y: 451 },
    { name: ['US SPX 500', 'Mar 2023'], search: true, pct: '0,49 %', diff: '19,25', spread: '7,0', bid: ['3891,0', '3'], ask: ['3891,7', '3'], low: '3 872,65', high: '3 899,23', qty: '-', x: 1616, y: 560 },
    { name: ['US NDAQ 100', 'Mar 2023'], pct: '0,54 %', diff: '61,8', spread: '3,0', trend: 'up', bid: ['11379,', '8'], ask: ['11382,', '8'], low: '11 321,0', high: '11 407,3', qty: '-', x: 1615, y: 669 },
    { name: ['US 30', 'Mar 2023'], search: true, pct: '0,42 %', diff: '142', spread: '4,0', trend: 'down', bid: ['33217,', '0'], ask: ['33221,', '0'], low: '33 084,0', high: '33 281,5', qty: '-', x: 1614, y: 785 },
    { name: ['US SPX 500'], search: true, pct: '0,51 %', diff: '19,7', spread: '6,0', bid: ['3863,5', '4'], ask: ['3864,1', '4'], low: '3 845,48', high: '3 871,88', qty: '-', x: 14, y: 904 },
    { name: ['US NDAQ 100'], pct: '0,54 %', diff: '60,88', spread: '2,00', trend: 'up', bid: ['11273,', '38'], ask: ['11275,', '38'], low: '11 215,50', high: '11 301,00', qty: '0,02', x: 285, y: 906 },
    { name: ['US 30'], size: 'big', search: true, pct: '0,43 %', diff: '141,84', spread: '3,00', trend: 'down', bid: ['32997,', '34'], ask: ['33000,', '34'], low: '32 863,50', high: '33 060,57', qty: '-', x: 553, y: 910 },
  ];

  const shapes = ['Ligne De ...', 'Ligne S/r', 'Cours', 'Fixe', 'Nb', 'Fibonacci', 'Rectangle', 'Ovale', 'Flèche', 'Vague Mo...', 'Vague Co...'];
  const empty = Array.from({ length: 21 }, (_, i) => i);
</script>

{#snippet icon(name: string, size = 16)}
  <svg class="icon" viewBox="0 0 16 16" width={size} height={size} aria-hidden="true">
    <path d={icons[name].d} class:solid={icons[name].fill} />
  </svg>
{/snippet}

{#snippet grip(lit = false)}
  <span class="grip" class:lit></span>
{/snippet}

{#snippet header(kind: string, account: string, tabs: string[], active: number)}
  <header class="top">
    <button class="user" aria-label="Profil">{@render icon('user', 20)}</button>
    <div class="brand">
      <svg viewBox="0 0 22 24" width="22" height="24" aria-hidden="true">
        <path d="M0 1q4-1 5 2v20H1V6zM8 1q4-1 5 2v20H9V6zM16 1q4-1 5 2v20h-4V6z" />
      </svg>
      <div>
        <b>CFD</b>
        <small><em class={kind === 'Demo' ? 'demo' : 'live'}>{kind}</em> {account}</small>
      </div>
    </div>
    <button class="find" aria-label="Rechercher">{@render icon('search', 18)}</button>
    <nav>
      <div class="spaces">
        {#each tabs as tab, i}
          <button class:active={i === active}>{tab}</button>
        {/each}
        <button class="add" aria-label="Ajouter">{@render icon('plus', 14)}</button>
        {#if kind !== 'Demo'}
          <button class="add" aria-label="Mode souris">{@render icon('mouse', 16)}</button>
        {/if}
      </div>
      <div class="menu">
        {#each menu as [glyph, label, width]}
          <button class:off={kind === 'Demo' && glyph === 'window'} style="width:{width}px">{@render icon(glyph, 15)}{label}</button>
        {/each}
      </div>
    </nav>
    <button class="fund">{@render icon('wallet', 20)}<span>Ajouter<br />des Fonds</span></button>
    <button class="recap">Afficher le Récap.&nbsp; du Compte</button>
    <button class="fold" aria-label="Replier">{@render icon('back', 12)}</button>
    <div class="clock">
      <time>10:40:22</time>
      <div>
        <button aria-label="Informations">{@render icon('info', 16)}</button>
        <button aria-label="Déconnexion">{@render icon('power', 16)}</button>
      </div>
    </div>
  </header>
{/snippet}

{#snippet titleBar(n: string, name: string, pct: string, diff: string, bid: string, ask: string, spread: string, popped = false)}
  <div class="title">
    <button class="burger" aria-label="Menu">{@render icon('bars', 12)}</button>
    <button class="tab"><i>{n}</i>{name}{@render icon('search', 14)}</button>
    {#if !popped}<button class="plain" aria-label="Nouvel onglet">{@render icon('plus', 11)}</button>{/if}
    <span class="fill"></span>
    <p class="move"><span>▲ {pct}</span><span>{diff}</span></p>
    <button class="quote sell">{bid}<span>▲</span></button>
    <button class="quote buy">{ask}<span>▲</span></button>
    <span class="spread" class:tight={popped}>{spread}</span>
    {#if !popped}
      {@render grip()}
      <button class="plain" aria-label="Réduire">{@render icon('shrink', 12)}</button>
      <button class="plain" aria-label="Détacher">{@render icon('popout', 12)}</button>
      <button class="plain" aria-label="Fermer">{@render icon('close', 11)}</button>
    {/if}
  </div>
{/snippet}

{#snippet toolBar(layout: string, period: string, quick: string[], range: string, models: string[])}
  <div class="tools">
    <button class="sq" aria-label="Liste">{@render icon('doc', 14)}</button>
    <button class="sq" aria-label="Disposition">{@render icon(layout, 14)}</button>
    <button class="period">{period}</button>
    {#each quick as q}<button class="hot">{q}</button>{/each}
    <button class="range">{range}</button>
    {#each ['SLS', models[0], '1S'] as q}<button class="hot">{q}</button>{/each}
    <button class="wide">{@render icon('sliders', 14)}Modèles</button>
    {#each models.slice(1) as q}<button class="hot">{q}</button>{/each}
    <button class="wide">{@render icon('candles', 14)}Vente</button>
    <button class="wide">{@render icon('link', 13)}Lié</button>
    <span class="fill"></span>
    <button class="wide">{@render icon('gear', 13)}Paramètres</button>
  </div>
{/snippet}

{#snippet bottomBar(pencil: boolean, favs = false)}
  <div class="bottom">
    <button aria-label="Actualiser">{@render icon('refresh', 13)}</button>
    <button aria-label="Effacer">{@render icon('ban', 13)}</button>
    <button class:on={pencil} aria-label="Dessiner">{@render icon('pencil', 12)}</button>
    <button class="on" aria-label="Aimanter">{@render icon('updown', 12)}</button>
    <span class="fill"></span>
    <button class="word fav" class:on={favs}>Favoris {@render icon('star', 12)}</button>
    <button class="word">Période</button>
    <button class="word">Outils De Dessin</button>
    <button class="word">Indicateurs</button>
    <button class="word">Figures</button>
    <span class="fill"></span>
    <button aria-label="Ajuster">{@render icon('fit', 12)}</button>
    <button aria-label="Dézoomer">{@render icon('minus', 12)}</button>
    <button aria-label="Zoomer">{@render icon('plus', 12)}</button>
    <button class="on" aria-label="Réticule">{@render icon('cross', 13)}</button>
    <button class="on" aria-label="Échelle">{@render icon('vfit', 13)}</button>
  </div>
{/snippet}

{#snippet chart(c: Chart)}
  {@const bars = candles(c)}
  {@const X = (x: number) => Math.round(x / c.kx)}
  {@const Y = (y: number) => Math.round(y / c.ky - c.y0)}
  {@const edge = X(c.axis)}
  {@const head = c.dark ? 17 : 14}
  <svg class="chart" class:dark={c.dark} viewBox="0 0 {c.w} {c.h}" role="img" aria-label={c.name}>
    <rect width={c.w} height={c.h} fill={c.dark ? '#000' : 'url(#paper)'} />
    {#each c.zones as z}
      {@const [x1, y1, x2, y2] = z.box}
      <rect x={X(x1)} y={Y(y1)} width={X(x2) - X(x1)} height={Y(y2) - Y(y1)} fill={z.fill} />
      {#if z.stroke}
        <path class="dashed" stroke={z.stroke} d="M{X(x1)}.5 {Y(y1)}.5H{X(x2)}M{X(x1)} {Y(y2)}.5H{X(x2)}M{X(x1)}.5 {Y(y1)}V{Y(y2)}M{X(x2)}.5 {Y(y1)}V{Y(y2)}" />
      {/if}
    {/each}
    {#each c.lines as l}
      <line x1={X(l.p[0])} y1={Y(l.p[1]) + (l.w ? 0 : 0.5)} x2={X(l.p[2])} y2={Y(l.p[3]) + (l.w ? 0 : 0.5)} stroke={l.c} stroke-width={l.w ?? 1} stroke-dasharray={l.dash} />
    {/each}
    <path d={bars.u.wick} stroke={c.up} /><path d={bars.d.wick} stroke={c.down} /><path d={bars.k.wick} stroke="#000" />
    <path d={bars.u.body} fill={c.up} /><path d={bars.d.body} fill={c.down} /><path d={bars.k.body} fill="#000" />
    {#if c.slow}<polyline points={curve(c, c.slow)} fill="none" stroke="#111" />{/if}
    {#if c.fast}<polyline points={curve(c, c.fast)} fill="none" stroke="#f00" stroke-width="2" stroke-dasharray="6 4" />{/if}
    {#each c.over ?? [] as l}
      <line x1={X(l.p[0])} y1={Y(l.p[1])} x2={X(l.p[2])} y2={Y(l.p[3])} stroke={l.c} stroke-width={l.w ?? 1} stroke-dasharray={l.dash} />
    {/each}
    {#each c.texts ?? [] as [x, y, text, fill]}
      <text x={X(x)} y={Y(y)} {fill}>{text}</text>
    {/each}
    {#each c.notes ?? [] as n}
      {@const left = X(n.box[0])}
      {@const top = Y(n.box[1])}
      {@const right = X(n.box[2])}
      <rect x={left} y={top} width={right - left} height={Y(n.box[3]) - top} fill={n.bg} stroke="#f00" />
      <path d="M{right} {top}l8 8l-8 8z" fill="#f00" />
      {#each n.lines as line, i}
        <text class:big={c.dark} class="note" x={left + 2} y={top + (c.dark ? 14 : 12) + i * 15} fill={n.fg}>{line}</text>
      {/each}
    {/each}
    {#if c === daxSeconds}
      <ellipse cx="1253" cy="500" rx="22" ry="57" fill="#f00" fill-opacity="0.2" stroke="#f01414" />
      <ellipse cx="803" cy="326" rx="2" ry="40" fill="none" stroke="#888" />
      <path d="M1090 486L1098 470 1094 469 1105 459 1109 473 1105 471 1097 487zM1402 528L1408 510 1401 511 1412 499 1420 511 1415 511 1409 529z" fill="#f00" stroke="#f00" stroke-width="2" />
    {/if}
    {#if c === daxMinute}
      <path d="M1473 292l6-6 6 6zM1473 296l6 6 6-6z" fill="#f00" />
      <path d="M1395.5 14V795" stroke="#111" />
    {/if}
    <rect x={edge} width={c.w - edge} height={c.h} fill={c.axisBg} />
    <line x1={edge} y1={head} x2={edge} y2={c.h} stroke={c.dark ? '#6a6a6a' : '#d4d4d4'} stroke-width={c.dark ? 2 : 1} />
    {#each c.ticks as [y, text]}
      <text class="price" x={edge + 7} y={Y(y) + 4}>{text}</text>
    {/each}
    {#each c.tags as t}
      {@const h = t.h ?? 17}
      {@const left = t.kind === 'full' ? edge : X(t.x ?? 1446)}
      <rect x={left} y={Y(t.y) - Math.floor(h / 2)} width={t.kind === 'full' ? c.w - edge - 2 : 57} height={h} rx={t.kind === 'full' && h !== 21 ? 0 : 3} fill={t.bg} />
      <text class="tag" class:big={h === 21} class:light={t.fg} x={left + (t.kind === 'full' && h !== 21 ? 7 : 2)} y={Y(t.y) + 4} fill={t.fg ?? '#fff'}>{t.text}</text>
    {/each}
    <rect width={c.w} height={head} fill={c.dark ? '#111' : '#fcfcfc'} />
    <rect y={head} width={c.w} height={c.dark ? 3 : 2} fill={c.dark ? '#696969' : '#d8d8d8'} />
    {#each c.times as [x, text]}
      <text class="time" text-anchor="middle" x={X(x)} y={c.dark ? 15 : 12}>{text}</text>
    {/each}
    <path d="M{X(c.marker) - 6} {head + 13}v-7l6-6l6 6v7z" fill="#b4b4b4" stroke={c.dark ? 'none' : '#444'} />
    {#if c === daxSeconds}
      <rect width="123" height="14" fill="#000" /><text x="3" y="11" fill="#fff">19 déc. 2022 10:58:30</text>
    {/if}
    {#if c === daxMinute}
      <rect x="1335" width="123" height="14" fill="#000" /><text x="1338" y="11" fill="#fff">19 déc. 2022 10:46:00</text>
    {/if}
    {#if c === daxQuarter}
      <rect x="1" y="1" width={c.w - 2} height={c.h - 2} fill="none" stroke="#0a78e6" stroke-width="2" />
    {/if}
  </svg>
{/snippet}

{#snippet drawing(i: number)}
  <svg viewBox="0 0 24 24" width="24" height="24" fill="none" stroke-width="2" aria-hidden="true">
    {#if i === 0}<path d="M6 16l10-6" stroke="#ff0" /><circle cx="4" cy="18" r="2" /><circle cx="20" cy="8" r="2" />
    {:else if i === 1}<path d="M7 12h10" stroke="#ff0" /><circle cx="3" cy="12" r="2" /><circle cx="21" cy="12" r="2" />
    {:else if i === 2}<path d="M2 4h18v17H2z" fill="#15414f" /><path d="M0 3h18M6 21h18" stroke="#0bf" /><path d="M12 18V7M9 10l3-3 3 3" stroke="#aaa" /><circle cx="21" cy="3" r="2" /><circle cx="3" cy="21" r="2" />
    {:else if i === 3}<path d="M12 7v11" stroke="#ff0" /><circle cx="12" cy="3" r="2" /><circle cx="12" cy="21" r="2" />
    {:else if i === 4}<circle cx="5" cy="12" r="2" /><path d="M9 19l6-15 6 15M11 14h8" stroke="#999" />
    {:else if i === 5}<path d="M5 3h18M0 21h11M15 21h8M4 4l8 17" stroke="#0bf" /><path d="M2 9h22M2 12h22M2 15h22" stroke="#999" stroke-dasharray="1 2" stroke-width="1" /><circle cx="3" cy="3" r="2" /><circle cx="13" cy="21" r="2" />
    {:else if i === 6}<path d="M3 17V4h15M21 7v13H7" stroke="#0f0" /><circle cx="21" cy="4" r="2" /><circle cx="3" cy="20" r="2" />
    {:else if i === 7}<ellipse cx="12" cy="12" rx="12" ry="10" stroke="#0f0" transform="rotate(-35 12 12)" />
    {:else if i === 8}<path d="M3 21l6-6" stroke-dasharray="2 2" /><path d="M9 15L20 4M12 4h8v8" stroke="#999" />
    {:else if i === 9}<path d="M4 13l6 7L20 5" stroke="#f40" stroke-dasharray="5 1" /><circle cx="3" cy="12" r="2" /><circle cx="11" cy="21" r="2" /><circle cx="21" cy="3" r="2" />
    {:else}<path d="M3 12l4 8 3-14 5 8 5-10" stroke="#f40" stroke-dasharray="4 1" /><circle cx="2" cy="12" r="2" /><circle cx="7" cy="21" r="2" /><circle cx="9" cy="6" r="2" /><circle cx="16" cy="14" r="2" /><circle cx="21" cy="3" r="2" />{/if}
  </svg>
{/snippet}

<svg class="defs" width="0" height="0" aria-hidden="true">
  <linearGradient id="paper" x2="0" y2="1"><stop stop-color="#e9e9e9" /><stop offset="1" stop-color="#fff" /></linearGradient>
</svg>

<main>
  <div class="column">
    <section class="app demo-app">
      {@render header('Demo', '20800479', ['Devises', 'Indices', 'Commodities'], 1)}
      <div class="markets">
        <button class="active">Allemagne 40</button><button>US 30</button><button>US NDAQ 100</button><button>US SPX 500</button>
      </div>
      {@render titleBar('1', 'Allemagne 40', '0,28 %', '39,435', '13 947,78', '13 948,78', '1,00')}
      {@render toolBar('split', '15 minutes', ['15m', '30m', '4h'], '4 Jours', ['3J', '1', '7'])}
      <div class="pair">{@render chart(daxHours)}{@render chart(daxQuarter)}</div>
      {@render bottomBar(true)}
    </section>

    <section class="app live-app">
      {@render header('Réel', '21978566', ['Trade', 'Action Europe', 'Action Usa'], 0)}
      <div class="desk">
        <article class="pane">
          {@render titleBar('4', 'Allemagne 40', '0,28 %', '39,435', '13 947,78', '13 948,78', '1,00')}
          {@render toolBar('quad', '1 minute', ['1m', '2m', '5m'], '32 Minutes', ['1J', '1', '5', '6'])}
          {@render chart(daxMinute)}
          <ul class="studies">
            {#each ['MME (13, 0)', 'MME (34, 0)', 'Pts Pivot'] as study, i}
              <li class:red={i === 0}><button aria-label="Retirer">X</button><button aria-label="Masquer">_</button><span>{study}</span></li>
            {/each}
          </ul>
          {@render bottomBar(true)}
        </article>

        <form class="ticket" onsubmit={(e) => e.preventDefault()}>
          <div class="title">
            <button type="button" class="burger" aria-label="Menu">{@render icon('bars', 12)}</button>
            <button type="button" class="tab">Allemagne 40{@render icon('search', 15)}</button>
            <span class="fill"></span>
            {@render grip(true)}
            <button type="button" class="plain" aria-label="Fermer">{@render icon('close', 12)}</button>
          </div>
          <div class="sides">
            <button type="button" class="bid"><small>VENDRE</small><strong>13947,<sub>78</sub></strong><span>B:13 899,37</span></button>
            <button type="button" class="ask"><small>ACHETER</small><strong>13948,<sub>78</sub></strong><span>H:13 995,41</span></button>
            <button type="button" class="level">Niveau 1 {@render icon('down', 10)}</button>
            <p class="gap"><i>▲</i><b>1,00</b><i>▲</i></p>
          </div>
          <div class="units">
            <label>Unités<input value="0,02" /></label>
            <label>Montant (€)<input class="dim" value="278,95" /></label>
            <button type="button" class="mode">Marché<span>{@render icon('down', 12)}</span></button>
          </div>
          <div class="units stop">
            <label><span><i class="chip blue">{@render icon('arrowUp', 10)}</i>Stop Loss</span><input class="dim" value="13969,78" /></label>
            <label><span class="pts"><i class="chip">{@render icon('wave', 11)}</i>Points</span><input value="22,00" /></label>
            <div class="kind">
              <button type="button" class="chip" aria-label="Retirer">{@render icon('close', 12)}</button>
              <button type="button" class="mode">Classique<span>{@render icon('down', 12)}</span></button>
            </div>
            <p>Montant (€) 0,44</p>
          </div>
          <button type="button" class="row green">+ Take Profit</button>
          <button type="button" class="row">{@render icon('right', 9)}Marge Estimée (€)<output>13,94</output></button>
          <button type="button" class="row">{@render icon('right', 9)}Coûts Estimés (€)<output>0,03</output></button>
          <button type="button" class="row doc">Document d’Informations clés{@render icon('download', 14)}</button>
          <div class="place"><button>Placer Ordre au Marché de Vente</button></div>
        </form>

        {#each quotes as q}
          <article class="tile" style="left:{q.x}px;top:{q.y}px">
            <div class="title">
              <button class="burger" aria-label="Menu">{@render icon('bars', 12)}</button>
              <button class="tab {q.size ?? ''}"><span>{#each q.name as n}<span>{n}</span>{/each}</span>{#if q.search}{@render icon('search', 15)}{/if}</button>
              <span class="fill"></span>
              <p class="move"><span>▲ {q.pct}</span><span>{q.diff}</span></p>
              {@render grip(q.lit)}
              <button class="plain" aria-label="Fermer">{@render icon('close', 11)}</button>
            </div>
            <div class="sides">
              <button class="bid"><small>VENDRE</small><strong>{q.bid[0]}<sub>{q.bid[1]}</sub></strong><span>B:{q.low}</span></button>
              <button class="ask"><small>ACHETER</small><strong>{q.ask[0]}<sub>{q.ask[1]}</sub></strong><span>H:{q.high}</span></button>
              <p class="gap {q.trend ?? 'flat'}"><i>{q.trend === 'down' ? '▼' : '▲'}</i><b>{q.spread}</b><i>{q.trend === 'down' ? '▼' : '▲'}</i></p>
              <button class="qty"><span>{q.qty}</span>{@render icon('down', 10)}</button>
            </div>
          </article>
        {/each}

        <article class="positions">
          <div class="title">
            <button class="burger" aria-label="Menu">{@render icon('bars', 12)}</button>
            <button class="tab">Positions (0){@render icon('close', 9)}</button>
            <button class="plain">Carnet des Ordres Exécutés</button>
            <button class="plain" aria-label="Nouvel onglet">{@render icon('plus', 10)}</button>
            <span class="fill"></span>
            {@render grip(true)}
            <button class="plain" aria-label="Agrandir">{@render icon('grow', 10)}</button>
            <button class="plain" aria-label="Fermer">{@render icon('close', 10)}</button>
          </div>
          <table>
            <thead>
              <tr>
                <th class="c0">{@render icon('refresh', 9)}</th><th class="c1">POSITION/ORDRE N° ▲</th><th class="c2">A/V</th><th class="c3">UNITÉS</th><th class="c4">MONTANT</th>
                <th class="c5">PV&amp;MV TOTALES ⇕</th><th class="c6">STOP LOSS</th><th class="c6">TAKE PROFIT</th><th class="c7">VENTE</th><th class="c8">ACHAT</th><th></th>
              </tr>
            </thead>
          </table>
          <p class="notice"><i>i</i><span>Aucune Transaction Ou Position.</span></p>
        </article>
      </div>
    </section>
  </div>

  <div class="column">
    <section class="chrome">
      <div class="caption">
        <svg viewBox="0 0 14 16" width="14" height="16" aria-hidden="true"><path d="M0 1l4 1v13H1zM5 1l4 1v13H6zM10 1l4 1v13h-3z" fill="#12a5c0" /></svg>
        <span>CMC Markets - Google Chrome</span>
        <button aria-label="Réduire">{@render icon('minus', 12)}</button>
        <button aria-label="Restaurer">{@render icon('square', 12)}</button>
        <button aria-label="Fermer">{@render icon('close', 13)}</button>
      </div>
      <div class="address">{@render icon('lock', 11)}<a href="#app">platform.cmcmarkets.com<span>/popout.html#/app?r=FR&amp;b=CMC-CFD</span></a></div>
    </section>
    <section class="app popup">
      {@render titleBar('1', 'Allemagne 40 - Mar 2023', '0,22 %', '32', '14 017,0', '14 019,0', '..', true)}
      {@render toolBar('quad', '5 minutes', ['1m', '2m', '5m'], '3 Jours', ['1J', '1', '5', '6'])}
      {@render chart(daxFuture)}
      {@render bottomBar(false)}
    </section>
    <footer class="taskbar">
      <span class="fill"></span>
      <button aria-label="Démarrer"><svg viewBox="0 0 24 24" width="24" height="24"><path d="M0 0h11.500v11.500H0zM12.500 0H24v11.500H12.500zM0 12.500h11.500V24H0zM12.500 12.500H24V24H12.500z" fill="#0f8ae0" /></svg></button>
      <button class="seek">{@render icon('search', 15)}Recherche</button>
      <button aria-label="Bureaux"><svg viewBox="0 0 24 24" width="24" height="24"><path d="M8 0h15v17H8z" fill="#f5f5f5" /><path d="M1 5h15v17H1z" fill="#333" /><path d="M8 5h8v12H8z" fill="#8a8a8a" /></svg></button>
      <button aria-label="Explorateur"><svg viewBox="0 0 24 24" width="24" height="24"><path d="M0 3h9l3 3h12v16H0z" fill="#f7b916" /><path d="M0 9h24v13H0z" fill="#ffd45c" /><path d="M5 15h14v7H5z" fill="#1479d2" /></svg></button>
      <button class="current" aria-label="Chrome"><svg viewBox="0 0 24 24" width="24" height="24"><circle cx="12" cy="12" r="12" fill="#fbc116" /><path d="M12 12L1.600 6A12 12 0 0 1 22.400 6z" fill="#e33b2e" /><path d="M12 12L1.600 6A12 12 0 0 0 12 24l5-9z" fill="#2da14c" /><circle cx="12" cy="12" r="6" fill="#fff" /><circle cx="12" cy="12" r="4" fill="#3f80ea" /></svg></button>
      <button aria-label="Réglages"><svg viewBox="0 0 24 24" width="24" height="24"><circle cx="12" cy="12" r="8" fill="none" stroke="#5f6d7a" stroke-width="5" /><path d="M12 0v24M0 12h24M4 4l16 16M20 4L4 20" stroke="#5f6d7a" stroke-width="3" /><circle cx="12" cy="12" r="6" fill="#ccd6de" /><circle cx="12" cy="12" r="4" fill="#1f6fc4" /></svg></button>
      <button aria-label="Capture"><svg viewBox="0 0 24 24" width="24" height="24"><path d="M2 1h13v14H2z" fill="#fff" stroke="#d64524" stroke-width="2" stroke-dasharray="4 2" /><path d="M12 6v9M8 12l10 5" stroke="#222" stroke-width="1" /><circle cx="20" cy="17" r="3" fill="none" stroke="#1b9be0" stroke-width="2" /><circle cx="13" cy="20" r="3" fill="none" stroke="#1b9be0" stroke-width="2" /></svg></button>
      <button aria-label="TradingView"><svg viewBox="0 0 24 24" width="24" height="24"><path d="M0 0h24v24H0z" fill="#131722" /><path d="M4 7h8v10H8v-6H4zM17 7h4l-4 10h-4z" fill="#fff" /><circle cx="14" cy="9" r="2" fill="#fff" /></svg></button>
      <span class="fill"></span>
      <p><time>10:40</time><time>19/12/2022</time></p>
    </footer>
    <section class="app popup">
      {@render titleBar('1', 'Allemagne 40', '0,28 %', '39,435', '13 947,78', '13 948,78', '..', true)}
      {@render toolBar('quad', '30 secondes', ['1m', '2m', '5m'], '3 heures', ['1J', '1', '5', '6'])}
      {@render chart(daxSeconds)}
      <div class="palette">
        {#each shapes as shape, i}
          <button><span>{@render drawing(i)}</span>{shape}</button>
        {/each}
        {#each empty as n (n)}<i></i>{/each}
      </div>
      {@render bottomBar(true, true)}
    </section>
  </div>
</main>

<style>
  :global(body) {
    margin: 0;
    background: #0c141b;
  }
  main {
    display: grid;
    grid-template-columns: 1fr 1fr;
    font: 12px/14px 'Liberation Sans', Arial, sans-serif;
    color: #f2f2f2;
  }
  .column {
    min-width: 0;
  }
  .defs {
    position: absolute;
  }
  button {
    display: flex;
    align-items: center;
    justify-content: center;
    gap: 6px;
    margin: 0;
    padding: 0;
    font: inherit;
    color: inherit;
    background: none;
    border: 0;
    cursor: pointer;
    white-space: nowrap;
  }
  p,
  ul {
    margin: 0;
    padding: 0;
  }
  i,
  em {
    font-style: normal;
  }
  .icon {
    flex: none;
  }
  .icon path {
    fill: none;
    stroke: currentColor;
    stroke-width: 1.5;
  }
  .icon path.solid {
    fill: currentColor;
    stroke: none;
  }
  .fill {
    flex: 1;
  }

  /* application header */
  .top {
    display: flex;
    height: 51px;
    background: #1c2327;
    border-bottom: 1px solid #2b8c99;
  }
  .user {
    width: 31px;
    background: #05112d;
    border-right: 1px solid #111;
  }
  .brand {
    display: flex;
    align-items: center;
    gap: 14px;
    width: 126px;
    padding-left: 14px;
    background: #05112d;
  }
  .brand path {
    fill: #fff;
  }
  .brand b {
    display: block;
    font-size: 13px;
    font-weight: 400;
    line-height: 16px;
  }
  .brand small {
    font-size: 10px;
    color: #8a93a5;
  }
  .live-app .brand {
    width: 120px;
  }
  .demo {
    color: #00c8f0;
  }
  .live {
    color: #ff0;
  }
  .find {
    width: 51px;
    background: #009fb8;
    border-right: 1px solid #000;
  }
  nav {
    flex: 1;
  }
  .spaces,
  .menu {
    display: flex;
    height: 25px;
    background: #1c2327;
    border-bottom: 1px solid #000;
  }
  .spaces button {
    min-width: 80px;
    padding: 0 10px;
    font-size: 11px;
    border-right: 1px solid #000;
    border-top: 3px solid transparent;
    border-bottom: 3px solid transparent;
  }
  .spaces .active {
    border-bottom-color: #009fb8;
  }
  .spaces .add {
    min-width: 36px;
    color: #999;
  }
  .menu {
    background: #303338;
    border: 0;
  }
  .menu button {
    gap: 8px;
    border-right: 1px solid #000;
  }
  .menu .icon {
    color: #888;
  }
  .menu .off,
  .menu .off .icon {
    color: #48545f;
  }
  .fund {
    gap: 9px;
    width: 126px;
    font-size: 14px;
    line-height: 16px;
    text-align: left;
    background: #009fb8;
  }
  .recap {
    width: 169px;
    color: #a0a4a8;
    border-right: 1px solid #000;
  }
  .fold {
    width: 19px;
    background: #303338;
    border-right: 1px solid #000;
  }
  .clock {
    width: 79px;
    text-align: center;
    color: #999;
    background: #303338;
  }
  .clock time {
    display: block;
    height: 25px;
    font: 13px/26px 'Liberation Mono', monospace;
    border-bottom: 1px solid #000;
  }
  .clock div {
    display: grid;
    grid-template-columns: 1fr 1fr;
    height: 25px;
  }
  .clock button + button {
    border-left: 1px solid #000;
  }

  .markets {
    display: flex;
    gap: 4px;
    padding: 3px 2px 1px;
    background: #000;
  }
  .markets button {
    height: 19px;
    padding: 0 20px;
    background: #50565e;
    border-radius: 3px;
  }
  .markets .active {
    background: #003468;
  }

  /* window bars */
  .title {
    position: relative;
    display: flex;
    box-sizing: border-box;
    height: 31px;
    background: linear-gradient(#4b515a, #3d4249);
    border-top: 1px solid #5c626b;
    border-bottom: 1px solid #000;
  }
  .burger {
    width: 31px;
    color: #bbb;
    border-right: 1px solid #000;
  }
  .tab {
    gap: 6px;
    padding: 0 8px;
    background: #2f3337;
    border-right: 1px solid #111;
  }
  .tab .icon,
  .plain {
    color: #999;
  }
  .tab i {
    width: 13px;
    height: 14px;
    font-size: 11px;
    color: #999;
    border: 1px solid #888;
    border-radius: 50%;
  }
  .title > .plain {
    padding: 0 6px;
  }
  .title > .tab + .plain {
    padding: 0 10px;
  }
  .move {
    display: flex;
    flex-direction: column;
    justify-content: center;
    box-sizing: border-box;
    width: 63px;
    padding-right: 4px;
    text-align: right;
    color: #1fdd2a;
    background: #2f3337;
    white-space: nowrap;
  }
  .quote {
    position: relative;
    align-items: flex-start;
    width: 73px;
    padding-top: 3px;
    font-weight: 700;
    border-left: 1px solid #000;
  }
  .quote span {
    position: absolute;
    right: 16px;
    bottom: -1px;
    font-size: 9px;
    color: #00e626;
  }
  .quote.buy span {
    right: auto;
    left: 17px;
  }
  .sell {
    background: #47361f;
  }
  .buy {
    background: #17424d;
  }
  .spread {
    align-self: flex-end;
    z-index: 1;
    width: 26px;
    height: 11px;
    margin: 0 61px 0 -87px;
    font-size: 11px;
    line-height: 11px;
    text-align: center;
    background: #1d2127;
  }
  .spread.tight {
    width: 8px;
    margin: 0 69px 0 -77px;
  }
  .grip {
    width: 9px;
    height: 25px;
    margin: 2px 5px;
    background: repeating-linear-gradient(#000 0 1px, #3a3e44 1px 7px);
  }
  .grip.lit {
    border-top: 5px solid #00dcff;
    height: 20px;
  }
  .tools {
    display: flex;
    box-sizing: border-box;
    height: 22px;
    background: #303438;
    border-top: 1px solid #454a4f;
    border-bottom: 1px solid #000;
  }
  .tools button {
    border-right: 1px solid #000;
  }
  .tools .icon {
    color: #999;
  }
  .tools .sq {
    width: 32px;
  }
  .tools .period,
  .tools .range {
    justify-content: flex-start;
    box-sizing: border-box;
    width: 86px;
    padding-left: 7px;
  }
  .tools .hot {
    min-width: 23px;
    box-sizing: border-box;
    padding: 0 3px;
    font-size: 10px;
    font-weight: 700;
    color: #ff0;
  }
  .tools .wide {
    padding: 0 10px;
  }
  .tools .fill + .wide {
    border: 0;
    border-left: 1px solid #000;
  }
  .bottom {
    display: flex;
    box-sizing: border-box;
    height: 24px;
    color: #f2f2f2;
    background: #373a40;
    border-top: 1px solid #111;
    border-bottom: 1px solid #0c141b;
    font-size: 11px;
  }
  .bottom button {
    width: 30px;
    box-sizing: border-box;
    border-right: 1px solid #000;
  }
  .bottom .icon {
    color: #999;
  }
  .bottom .word {
    width: 100px;
  }
  .bottom .fav {
    gap: 30px;
  }
  .bottom .fill + button {
    border-left: 1px solid #000;
  }
  .bottom .on {
    background: #00346a;
  }
  .bottom .on .icon {
    color: #fff;
  }

  /* charts */
  .pair {
    display: grid;
    grid-template-columns: 1fr 1fr;
  }
  .chart {
    display: block;
    width: 100%;
    height: auto;
    fill: #222;
    font-size: 12px;
  }
  .dark .price,
  .dark .time {
    fill: #eee;
    font-weight: 700;
  }
  .tag {
    font-weight: 700;
  }
  .tag.light {
    font-weight: 400;
  }
  .tag.big {
    font-size: 13px;
  }
  .note {
    font-style: italic;
  }
  .note.big {
    font-size: 14px;
  }
  .dashed {
    fill: none;
    stroke-dasharray: 5 3;
  }

  /* live desk */
  .desk {
    position: relative;
    padding-top: 1px;
    height: 1029px;
    background: #0c141b;
  }
  .live-app {
    overflow: hidden;
  }
  .pane {
    position: relative;
    width: calc(100% - 355px);
  }
  .studies {
    position: absolute;
    top: 98px;
    left: 6px;
    color: #111;
    list-style: none;
  }
  .studies li {
    display: flex;
    width: max-content;
    height: 14px;
    margin-bottom: 3px;
    background: #fff;
    border: 1px solid #223;
  }
  .studies button {
    width: 14px;
    font-weight: 700;
    border-right: 1px solid #223;
  }
  .studies span {
    padding: 0 2px;
  }
  .studies .red {
    color: #e81010;
  }
  .ticket,
  .tile,
  .positions {
    position: absolute;
    box-shadow: 0 2px 8px #000;
  }
  .ticket {
    z-index: 1;
    top: 1px;
    left: 1570px;
    width: 251px;
    background: #1f2225;
  }
  .ticket .tab,
  .positions .tab {
    gap: 6px;
  }
  .sides {
    position: relative;
    display: grid;
    grid-template-columns: 1fr 1fr;
    height: 76px;
    border-bottom: 1px solid #000;
  }
  .ticket .sides {
    height: 70px;
  }
  .bid,
  .ask {
    flex-direction: column;
    justify-content: space-between;
    align-items: flex-start;
    gap: 0;
    padding: 1px 5px;
    background: linear-gradient(#363a42, #25282c);
    font-size: 11px;
  }
  .ask {
    align-items: flex-end;
    border-left: 1px solid #000;
  }
  .ticket .bid {
    background: linear-gradient(#54432a, #3a2c1c);
  }
  .bid small,
  .ask small {
    font-size: 11px;
    color: #b06c00;
  }
  .ticket .bid small {
    color: #f09a00;
  }
  .ask small {
    color: #008c9e;
  }
  .bid strong,
  .ask strong {
    align-self: center;
    font-size: 26px;
    font-weight: 400;
    line-height: 28px;
    color: #fff;
  }
  sub {
    font-size: 20px;
    vertical-align: baseline;
  }
  .bid span,
  .ask span {
    color: #8a8c8f;
  }
  .level {
    position: absolute;
    top: 0;
    left: 81px;
    gap: 14px;
    width: 91px;
    height: 16px;
    color: #f09a00;
    background: #303338;
    border: 1px solid #111;
    border-top: 0;
  }
  .gap {
    position: absolute;
    top: 0;
    left: 50%;
    display: flex;
    gap: 3px;
    transform: translateX(-50%);
    font-size: 12px;
  }
  .gap b {
    min-width: 24px;
    padding: 0 7px 1px;
    font-weight: 400;
    color: #ccc;
    text-align: center;
    background: #303338;
    border: 1px solid #111;
    border-top: 0;
  }
  .gap i {
    color: #00e626;
    line-height: 16px;
  }
  .gap.down i {
    color: #ff3028;
  }
  .gap.flat i {
    visibility: hidden;
  }
  .ticket .gap {
    top: auto;
    bottom: 0;
  }
  .ticket .gap b {
    color: #fff;
    font-weight: 700;
  }
  .qty {
    position: absolute;
    bottom: 0;
    left: 84px;
    gap: 0;
    height: 16px;
    background: #1b2027;
    border: 1px solid #000;
  }
  .qty span {
    width: 66px;
    margin-right: 4px;
    line-height: 16px;
    background: #00323f;
  }
  .qty .icon {
    margin-right: 3px;
    color: #aaa;
  }
  .units {
    display: grid;
    grid-template-columns: 86px 86px 56px;
    gap: 5px;
    padding: 9px 6px 11px;
    border-bottom: 1px solid #3a3d40;
  }
  .units label {
    text-align: center;
    color: #b06c00;
  }
  .units input {
    box-sizing: border-box;
    display: block;
    width: 86px;
    height: 27px;
    margin-top: 4px;
    font: 700 12px 'Liberation Sans', Arial, sans-serif;
    text-align: center;
    color: #fff;
    background: #16181b;
    border: 1px solid #3f4c5c;
    border-radius: 3px;
  }
  .units .dim {
    font-weight: 400;
    color: #999;
  }
  .mode {
    flex-direction: column;
    gap: 0;
    width: 56px;
    height: 45px;
    font-weight: 700;
    color: #fff;
    background: #b37300;
    border-radius: 2px;
    line-height: 22px;
    overflow: hidden;
  }
  .mode span {
    display: grid;
    place-items: center;
    width: 56px;
    height: 23px;
    color: #ffa200;
    background: #4c4e52;
  }
  .stop {
    padding: 7px 6px 3px;
    background: #141618;
  }
  .stop label > span {
    display: flex;
    align-items: center;
    gap: 5px;
    color: #d01818;
  }
  .stop label .pts {
    gap: 15px;
    color: #888;
  }
  .stop input {
    margin-top: 5px;
  }
  .chip {
    display: grid;
    place-items: center;
    width: 14px;
    height: 14px;
    color: #f04040;
    background: #2a3038;
    border-radius: 2px;
  }
  .chip.blue {
    color: #00d5ff;
  }
  .kind .chip {
    margin: 0 0 6px 42px;
  }
  .stop .mode {
    background: #d80000;
  }
  .stop .mode span {
    color: #ff3c3c;
  }
  .stop p {
    grid-column: 1 / 3;
    margin-top: -15px;
    padding-bottom: 8px;
    font-size: 11px;
    text-align: right;
    color: #85878a;
  }
  .row {
    justify-content: flex-start;
    box-sizing: border-box;
    width: 100%;
    height: 29px;
    padding: 0 10px;
    background: #181a1d;
    border-bottom: 1px solid #3a3d40;
  }
  .row output {
    margin-left: auto;
    font-weight: 700;
  }
  .green {
    color: #14b814;
  }
  .doc {
    justify-content: space-between;
    padding-left: 20px;
  }
  .place {
    padding: 12px;
  }
  .place button {
    width: 100%;
    padding: 10px 20px;
    box-sizing: border-box;
    height: 53px;
    font-size: 14px;
    line-height: 16px;
    white-space: normal;
    background: #bb7400;
    border-radius: 2px;
  }

  .tile {
    width: 251px;
  }
  .tile .tab {
    font-size: 10px;
    line-height: 11px;
    text-align: left;
  }
  .tile .tab.big {
    font-size: 12px;
  }
  .tile .tab span span {
    display: block;
  }
  .title > .grip {
    flex: none;
  }
  .tile .grip {
    margin-right: 2px;
  }

  .positions {
    top: 900px;
    left: 820px;
    width: 1069px;
    height: 123px;
    background: #1d1f22;
  }
  table {
    width: 100%;
    table-layout: fixed;
    border-collapse: collapse;
    background: #131517;
    border-bottom: 1px solid #000;
  }
  th {
    height: 22px;
    padding: 0 6px;
    font-size: 10px;
    text-align: right;
    color: #999;
    white-space: nowrap;
    border-right: 1px solid #2b2e32;
  }
  .c0 {
    width: 12px;
  }
  .c1 {
    width: 214px;
    padding-left: 16px;
    text-align: left;
    color: #fff;
  }
  .c2 {
    width: 20px;
  }
  .c3 {
    width: 88px;
  }
  .c4 {
    width: 126px;
  }
  .c5 {
    width: 135px;
  }
  .c6 {
    width: 87px;
  }
  .c7 {
    width: 57px;
    color: #c57000;
  }
  .c8 {
    width: 62px;
    color: #0092b4;
  }
  .notice {
    display: flex;
    width: 720px;
    height: 48px;
    margin: 1px auto;
    align-items: center;
    color: #7f97ac;
    background: #25272b;
  }
  .notice i {
    width: 17px;
    height: 17px;
    margin: 0 16px 0 13px;
    font-weight: 700;
    line-height: 17px;
    text-align: center;
    color: #25272b;
    background: #84a3bd;
    border-radius: 50%;
  }

  /* browser and taskbar */
  .chrome {
    color: #888;
    background: #fff;
    font-family: 'Open Sans', sans-serif;
    border-top: 2px solid #eee;
    box-sizing: border-box;
    height: 54px;
  }
  .caption {
    display: flex;
    align-items: center;
    gap: 6px;
    height: 23px;
    padding-left: 6px;
    font-size: 11px;
    border-bottom: 2px solid #ccc;
  }
  .caption span {
    flex: 1;
  }
  .caption button {
    width: 40px;
  }
  .address {
    display: flex;
    align-items: center;
    gap: 11px;
    height: 26px;
    padding-left: 12px;
    font-size: 14px;
    color: #555;
  }
  .address a {
    color: #222;
    text-decoration: none;
  }
  .address span {
    color: #666;
  }
  .popup .bottom {
    height: 21px;
    border-bottom: 0;
  }
  .popup .palette + .bottom {
    height: 20px;
  }
  .popup .burger {
    color: #777;
  }
  .taskbar {
    display: flex;
    align-items: center;
    gap: 21px;
    height: 47px;
    margin-bottom: 1px;
    padding-left: 40px;
    color: #333;
    background: linear-gradient(#d2d2d2, #dedede);
    font-family: 'Open Sans', sans-serif;
  }
  .taskbar button + .seek {
    width: 116px;
    height: 30px;
    margin: 0 -9px 0 -6px;
    background: #f7f7f7;
    border-radius: 15px;
  }
  .taskbar .current {
    margin: 0 -6px;
    padding: 7px 6px;
    background: #f0f0f0;
    border-bottom: 2px solid #0070c9;
    border-radius: 4px;
  }
  .taskbar p {
    width: 0;
    display: flex;
    flex-direction: column;
    align-items: flex-end;
    margin-right: 17px;
    font-size: 11px;
    line-height: 16px;
    color: #555;
  }
  .palette {
    display: flex;
    gap: 18px;
    height: 70px;
    box-sizing: border-box;
    padding: 9px 0 0 32px;
    overflow: hidden;
    background: #171b1f;
    border-top: 1px solid #333c42;
  }
  .palette button {
    flex: none;
    flex-direction: column;
    justify-content: flex-start;
    gap: 1px;
    width: 42px;
    font-size: 10px;
    line-height: 12px;
    color: #8e959c;
  }
  .palette span,
  .palette i {
    display: grid;
    place-items: center;
    flex: none;
    box-sizing: border-box;
    width: 42px;
    height: 42px;
    background: #21272e;
    border: 1px solid #000;
    border-radius: 4px;
  }
  .palette i {
    background: #08090b;
  }
  .palette svg {
    stroke: #999;
  }
</style>
